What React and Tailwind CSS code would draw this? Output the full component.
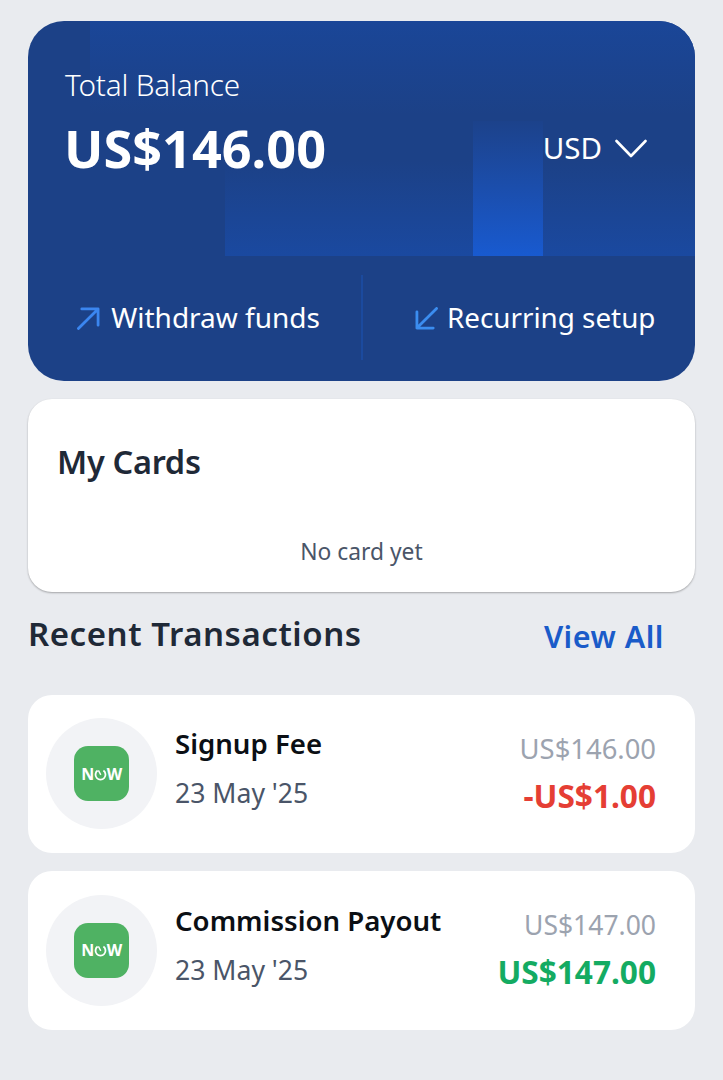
import React from 'react';

const transactions = [
  { id: 1, title: 'Signup Fee', date: "23 May '25", balance: 'US$146.00', balanceSize: 'text-[27.4px]', amount: '-US$1.00', color: 'text-[#e53e34]' },
  { id: 2, title: 'Commission Payout', date: "23 May '25", balance: 'US$147.00', balanceSize: 'text-[26.5px]', amount: 'US$147.00', color: 'text-[#14ab62]' },
];

function NowLogo() {
  return (
    <div className="w-[55px] h-[55px] rounded-[14px] bg-[#4fb263] flex items-center justify-center">
      <span className="relative text-white font-bold text-[16px] leading-none tracking-[-0.5px]">
        N
        <svg className="inline-block align-[-2px]" width="13" height="14" viewBox="0 0 13 14" fill="none" stroke="white">
          <path d="M3.6 2.6a5 5 0 1 0 5.8 0" strokeWidth="1.8" />
          <path d="M4.4 2.4l2.4 4.4" strokeWidth="1.4" />
        </svg>
        W
      </span>
    </div>
  );
}

function TransactionRow({ tx }) {
  return (
    <div className="h-[158.5px] bg-white rounded-[24px] pl-[18px] pr-[39px] flex items-center">
      <div className="w-[111px] h-[111px] rounded-full bg-[#f2f3f6] flex items-center justify-center shrink-0">
        <NowLogo />
      </div>
      <div className="ml-[18px] flex-1 -mt-[12px]">
        <p className="text-[27.6px] leading-[38px] font-semibold text-[#0b0f14]">{tx.title}</p>
        <p className="text-[26.6px] leading-[36px] mt-[13px] text-[#4a5568]">{tx.date}</p>
      </div>
      <div className="text-right -mt-[1px]">
        <p className={`${tx.balanceSize} leading-[36px] text-[#9ca3af]`}>{tx.balance}</p>
        <p className={`text-[31.6px] leading-[40px] mt-[9px] font-bold ${tx.color}`}>{tx.amount}</p>
      </div>
    </div>
  );
}

export default function App() {
  return (
    <div className="w-[723px] h-[1080px] bg-[#e9ebef] px-[28px] pt-[21px] overflow-hidden font-['Noto_Sans',sans-serif]">
      {/* Balance card */}
      <div className="relative h-[360px] rounded-[36px] bg-[#1c4187] overflow-hidden text-white">
        {/* layered glow blocks behind the balance */}
        <div className="absolute left-[62px] right-0 top-0 h-[235px] bg-gradient-to-b from-[#1a4698] to-[#1c4187] to-40%" />
        <div className="absolute left-[197px] right-0 top-[100px] h-[135px] bg-gradient-to-b from-[#1c4187] via-[#1c4187] via-30% to-[#1a49a0]" />
        <div className="absolute left-[445px] w-[70px] top-[100px] h-[135px] bg-gradient-to-b from-[#1c428b] to-[#185ad0]" />

        <div className="relative h-[235px] pl-[37px] pr-[48px]">
          <p className="pt-[44px] text-[29.7px] leading-[40px] font-light tracking-[-0.2px]">Total Balance</p>
          <div className="mt-[11px] flex items-center justify-between">
            <p className="text-[52.2px] leading-[64px] font-bold -ml-[1px]">US$146.00</p>
            <div className="flex items-center gap-[13px]">
              <span className="text-[29.5px] leading-[40px]">USD</span>
              <svg width="32" height="19" viewBox="0 0 32 19" fill="none" stroke="white" strokeWidth="2.6" strokeLinecap="round" strokeLinejoin="round">
                <path d="M1.5 2 L16 17 L30.5 2" />
              </svg>
            </div>
          </div>
        </div>

        {/* Actions */}
        <div className="relative h-[125px] flex items-center">
          <div className="w-[333px] flex items-center justify-end gap-[11px] pr-[41px]">
            <svg width="23" height="23" viewBox="0 0 24 24" fill="none" stroke="#3b86f0" strokeWidth="2.9" strokeLinecap="round" strokeLinejoin="round">
              <path d="M1.5 22.5 L22 2 M5 2 H22 V19" />
            </svg>
            <span className="text-[28px] leading-[40px] -mt-[3px]">Withdraw funds</span>
          </div>
          <div className="w-[2px] h-[85px] -mt-[2px] bg-[#1b4a9e]" />
          <div className="flex-1 flex items-center gap-[9px] pl-[52px]">
            <svg width="23" height="23" viewBox="0 0 24 24" fill="none" stroke="#3b8df0" strokeWidth="2.9" strokeLinecap="round" strokeLinejoin="round">
              <path d="M22.5 1.5 L2 22 M2 5 V22 H19" />
            </svg>
            <span className="text-[27.8px] leading-[40px] -mt-[3px]">Recurring setup</span>
          </div>
        </div>
      </div>

      {/* My cards */}
      <div className="mt-[18px] h-[193px] bg-white rounded-[24px] shadow-[0_1px_2px_rgba(0,0,0,0.3)] px-[29px] pt-[40px]">
        <h2 className="text-[32.5px] leading-[46px] font-semibold text-[#1f2937] tracking-[-0.3px]">My Cards</h2>
        <p className="mt-[51px] text-center text-[22.8px] leading-[32px] text-[#4a5568]">No card yet</p>
      </div>

      {/* Recent transactions */}
      <div className="mt-[18px] flex items-center justify-between pr-[31px]">
        <h2 className="text-[33px] leading-[46px] font-semibold text-[#1f2937] tracking-[0.55px]">Recent Transactions</h2>
        <button className="mt-[5px] text-[30.5px] leading-[42px] font-semibold text-[#1a5bc9] tracking-[0.5px]">View All</button>
      </div>

      <div className="mt-[37.5px] flex flex-col gap-[18px]">
        {transactions.map((tx) => (
          <TransactionRow key={tx.id} tx={tx} />
        ))}
      </div>
    </div>
  );
}
